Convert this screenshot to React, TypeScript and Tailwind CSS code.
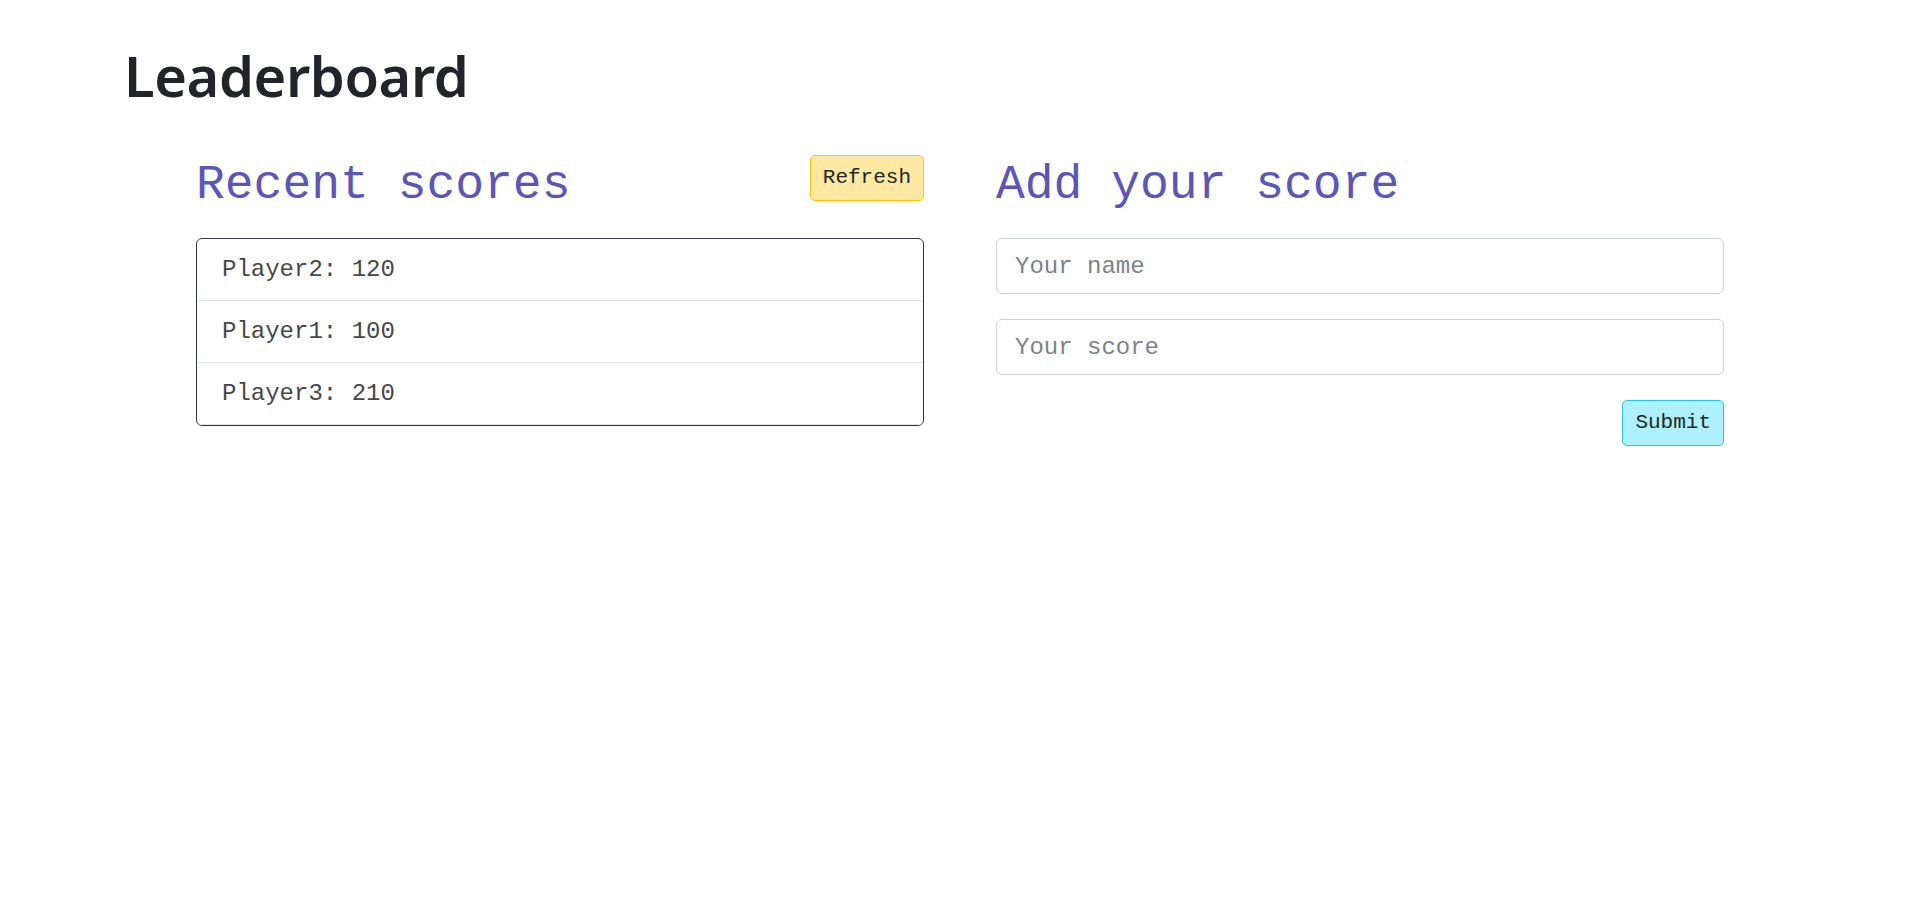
import { useState } from 'react';

type Score = { name: string; score: number };

const initialScores: Score[] = [
  { name: 'Player2', score: 120 },
  { name: 'Player1', score: 100 },
  { name: 'Player3', score: 210 },
];

export default function App() {
  const [scores] = useState<Score[]>(initialScores);
  const [name, setName] = useState('');
  const [score, setScore] = useState('');

  return (
    <div className="min-h-screen bg-white font-['Liberation_Mono',monospace] text-[#212529]">
      <div className="mx-auto w-[1680px] pt-[39px]">
        <h1 className="pl-[4px] font-['Noto_Sans',sans-serif] text-[56px] leading-[72px] font-semibold tracking-[-0.4px] text-[#212529]">
          Leaderboard
        </h1>

        <div className="mx-auto mt-[44px] flex w-[1528px] gap-[72px]">
          {/* recent scores */}
          <div className="w-[728px]">
            <div className="flex h-[83px] items-start justify-between">
              <h2 className="mt-[2px] text-[48px] leading-[57.6px] text-[#5b56b8]">Recent scores</h2>
              <button className="flex h-[46px] items-center rounded-[5px] border border-[#ffc107] bg-[#ffe8a1] px-[12px] text-[21px] text-[#212529]">
                Refresh
              </button>
            </div>
            <ul className="overflow-hidden rounded-[6px] border border-[#343a40]">
              {scores.map((s) => (
                <li
                  key={s.name}
                  className="flex h-[62px] items-center border-b border-[#dee2e6] px-[25px] text-[24px] leading-[36px] text-[#45474a]"
                >
                  {s.name}: {s.score}
                </li>
              ))}
            </ul>
          </div>

          {/* add score */}
          <div className="w-[728px]">
            <div className="h-[83px] pt-[2px]">
              <h2 className="text-[48px] leading-[57.6px] text-[#5b56b8]">Add your score</h2>
            </div>
            <input
              value={name}
              onChange={(e) => setName(e.target.value)}
              placeholder="Your name"
              className="block h-[56px] w-full rounded-[6px] border border-[#ced4da] px-[18px] text-[24px] outline-none placeholder:text-[#7d8288]"
            />
            <input
              value={score}
              onChange={(e) => setScore(e.target.value)}
              placeholder="Your score"
              className="mt-[25px] block h-[56px] w-full rounded-[6px] border border-[#ced4da] px-[18px] text-[24px] outline-none placeholder:text-[#7d8288]"
            />
            <div className="mt-[25px] flex justify-end">
              <button className="flex h-[46px] items-center rounded-[5px] border border-[#1fc8ec] bg-[#aef0fc] px-[12px] text-[21px] text-[#212529]">
                Submit
              </button>
            </div>
          </div>
        </div>
      </div>
    </div>
  );
}
